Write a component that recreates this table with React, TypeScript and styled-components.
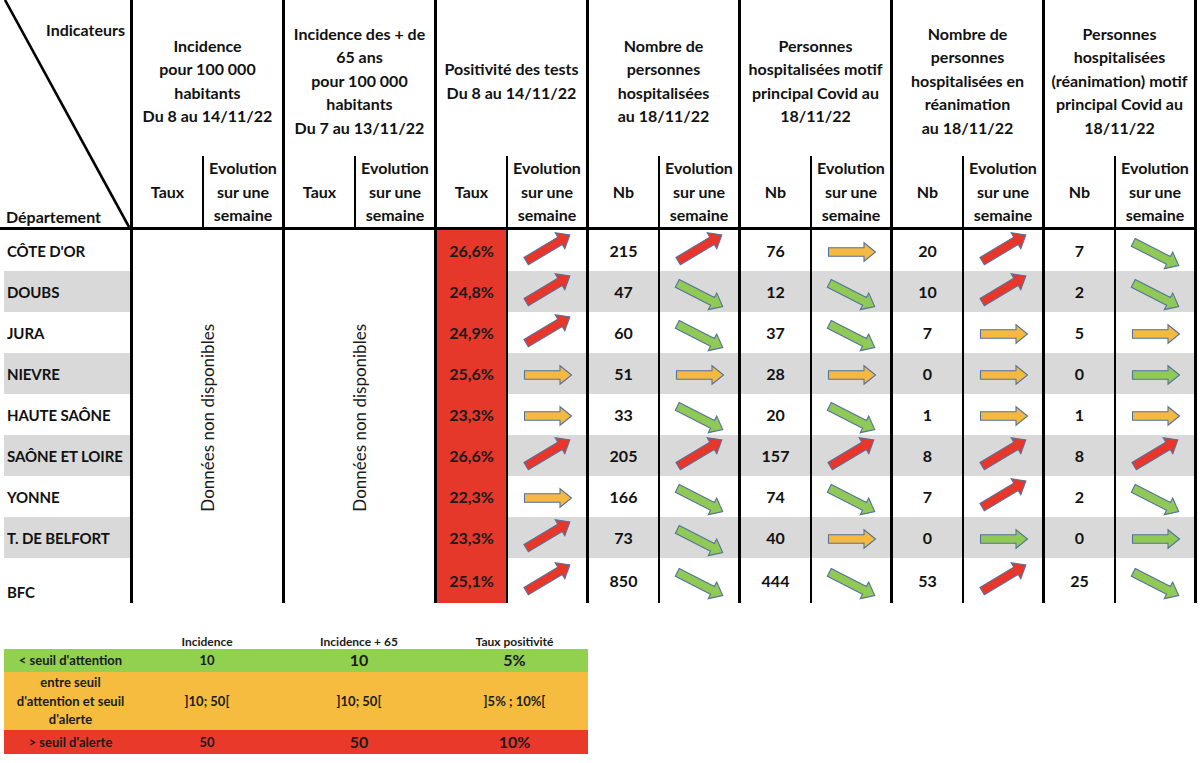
import React from "react";
import styled, { createGlobalStyle } from "styled-components";

const Global = createGlobalStyle`
  html, body { margin: 0; padding: 0; background: #fff; }
  body { font-family: Lato, "Liberation Sans", sans-serif; color: #111; }
`;

type Dir = "up" | "flat" | "down";
type Tone = "red" | "yellow" | "green";

const FILL: Record<Tone, string> = {
  red: "#e8362a",
  yellow: "#f5b941",
  green: "#90c956",
};

const Page = styled.div`
  width: 1200px;
  height: 763px;
  overflow: hidden;
`;

const Grid = styled.div`
  display: grid;
  grid-template-columns: 130px repeat(7, 72px 80px);
  grid-template-rows: 156px 74px repeat(8, 41px) 45px;
  width: 1194px;
  border-right: 3px solid #000;
`;

const Corner = styled.div`
  grid-row: 1 / span 2;
  grid-column: 1;
  position: relative;
  border-bottom: 3px solid #000;
  display: flex;
  flex-direction: column;
  justify-content: space-between;
  font-weight: 700;
  font-size: 16px;
`;

const CornerTop = styled.div`
  align-self: flex-end;
  padding: 19px 5px 0 0;
  line-height: 22px;
`;

const CornerBottom = styled.div`
  align-self: flex-start;
  padding: 0 0 0 6px;
  line-height: 20px;
`;

const Diagonal = styled.svg`
  position: absolute;
  left: 0;
  top: 0;
`;

const GroupHead = styled.div`
  grid-row: 1;
  grid-column: span 2;
  border-left: 3px solid #000;
  display: flex;
  align-items: center;
  justify-content: center;
  text-align: center;
  font-weight: 700;
  font-size: 16px;
  line-height: 23.5px;
  white-space: nowrap;
  padding-top: 5px;
`;

const SubHead = styled.div<{ $thin?: boolean }>`
  grid-row: 2;
  border-left: ${(p) => (p.$thin ? "2px" : "3px")} solid #000;
  border-bottom: 3px solid #000;
  display: flex;
  align-items: center;
  justify-content: center;
  text-align: center;
  font-weight: 700;
  font-size: 16px;
  line-height: 23.5px;
  white-space: nowrap;
`;

const NameCell = styled.div<{ $shade: boolean; $bottom?: boolean }>`
  grid-column: 1;
  border-left: 4px solid #fff;
  background: ${(p) => (p.$shade ? "#d9d9d9" : "#fff")};
  display: flex;
  align-items: ${(p) => (p.$bottom ? "flex-end" : "center")};
  padding: 0 0 ${(p) => (p.$bottom ? "2px" : "0")} 3px;
  font-weight: 700;
  font-size: 15px;
  letter-spacing: -0.1px;
  white-space: nowrap;
`;

const NoData = styled.div<{ $col: number }>`
  grid-row: 3 / span 9;
  grid-column: ${(p) => p.$col} / span 2;
  border-left: 3px solid #000;
  display: flex;
  align-items: center;
  justify-content: center;
`;

const NoDataText = styled.span`
  writing-mode: vertical-rl;
  transform: rotate(180deg);
  font-size: 17px;
  font-weight: 400;
  color: #1a1a1a;
  white-space: nowrap;
  margin-top: 2px;
`;

const RateCell = styled.div`
  grid-column: 6;
  border-left: 3px solid #000;
  background: #e5382a;
  display: flex;
  align-items: center;
  justify-content: center;
  font-weight: 700;
  font-size: 16px;
  color: #1a1a1a;
`;

const NbCell = styled.div<{ $shade: boolean }>`
  border-left: 3px solid #000;
  background: ${(p) => (p.$shade ? "#d9d9d9" : "#fff")};
  display: flex;
  align-items: center;
  justify-content: center;
  font-weight: 700;
  font-size: 16px;
`;

const EvoCell = styled.div<{ $shade: boolean }>`
  border-left: 2px solid #000;
  background: ${(p) => (p.$shade ? "#d9d9d9" : "#fff")};
  display: flex;
  align-items: center;
  justify-content: center;
`;

const ArrowSvg = styled.svg`
  display: block;
  overflow: visible;
`;

function Trend({ dir, tone }: { dir: Dir; tone: Tone }) {
  const angle = dir === "up" ? -31 : dir === "down" ? 27 : 0;
  const dy = dir === "up" ? -3 : dir === "down" ? 3 : 1;
  const half = dir === "flat" ? 23.5 : 25.5;
  const hs = 4.3;
  const hh = 9.3;
  const hl = 11.5;
  const d = `M${-half},${-hs} L${half - hl},${-hs} L${half - hl},${-hh} L${half},0 L${half - hl},${hh} L${half - hl},${hs} L${-half},${hs} Z`;
  return (
    <ArrowSvg width={56} height={36} viewBox="-28 -18 56 36">
      <path
        d={d}
        transform={`translate(1 ${dy}) rotate(${angle})`}
        fill={FILL[tone]}
        stroke="#53729c"
        strokeWidth={1.1}
        strokeLinejoin="miter"
      />
    </ArrowSvg>
  );
}

type T = [string, Dir, Tone];
type Row = {
  name: string;
  rate: string;
  pos: [Dir, Tone];
  vals: T[];
};

const U: [Dir, Tone] = ["up", "red"];
const Y: [Dir, Tone] = ["flat", "yellow"];
const G: [Dir, Tone] = ["flat", "green"];
const D: [Dir, Tone] = ["down", "green"];

const v = (n: string, a: [Dir, Tone]): T => [n, a[0], a[1]];

const ROWS: Row[] = [
  { name: "CÔTE D'OR", rate: "26,6%", pos: U, vals: [v("215", U), v("76", Y), v("20", U), v("7", D)] },
  { name: "DOUBS", rate: "24,8%", pos: U, vals: [v("47", D), v("12", D), v("10", U), v("2", D)] },
  { name: "JURA", rate: "24,9%", pos: U, vals: [v("60", D), v("37", D), v("7", Y), v("5", Y)] },
  { name: "NIEVRE", rate: "25,6%", pos: Y, vals: [v("51", Y), v("28", Y), v("0", Y), v("0", G)] },
  { name: "HAUTE SAÔNE", rate: "23,3%", pos: Y, vals: [v("33", D), v("20", D), v("1", Y), v("1", Y)] },
  { name: "SAÔNE ET LOIRE", rate: "26,6%", pos: U, vals: [v("205", U), v("157", U), v("8", U), v("8", U)] },
  { name: "YONNE", rate: "22,3%", pos: Y, vals: [v("166", D), v("74", D), v("7", U), v("2", D)] },
  { name: "T. DE BELFORT", rate: "23,3%", pos: U, vals: [v("73", D), v("40", Y), v("0", G), v("0", G)] },
  { name: "BFC", rate: "25,1%", pos: U, vals: [v("850", D), v("444", D), v("53", U), v("25", D)] },
];

const GROUPS: string[][] = [
  ["Incidence", "pour 100 000", "habitants", "Du 8 au 14/11/22"],
  ["Incidence des + de", "65 ans", "pour 100 000", "habitants", "Du 7 au 13/11/22"],
  ["Positivité des tests", "Du 8 au 14/11/22"],
  ["Nombre de", "personnes", "hospitalisées", "au 18/11/22"],
  ["Personnes", "hospitalisées motif", "principal Covid au", "18/11/22"],
  ["Nombre de", "personnes", "hospitalisées en", "réanimation", "au 18/11/22"],
  ["Personnes", "hospitalisées", "(réanimation) motif", "principal Covid au", "18/11/22"],
];

const Lines = ({ lines }: { lines: string[] }) => (
  <div>
    {lines.map((l, i) => (
      <div key={i}>{l}</div>
    ))}
  </div>
);

/* Legend */
const Legend = styled.div`
  display: grid;
  grid-template-columns: 133px 140px 164px 147px;
  grid-template-rows: 16px 23px 58px 24px;
  width: 584px;
  margin: 30px 0 0 4px;
  color: #1b1b1b;
`;

const LegendHead = styled.div`
  display: flex;
  align-items: flex-end;
  justify-content: center;
  font-size: 12px;
  font-weight: 700;
  white-space: nowrap;
`;

const LegendCell = styled.div<{ $bg: string; $big?: boolean }>`
  background: ${(p) => p.$bg};
  display: flex;
  align-items: center;
  justify-content: center;
  text-align: center;
  font-size: ${(p) => (p.$big ? "16px" : "13px")};
  font-weight: 700;
  line-height: 18.5px;
  white-space: nowrap;
`;

const GREEN = "#92d050";
const YELLOW = "#f5bc40";
const RED = "#e8392a";

export default function App() {
  return (
    <Page>
      <Global />
      <Grid>
        <Corner>
          <Diagonal width={130} height={227} viewBox="0 0 130 227">
            <line x1={5} y1={0} x2={129} y2={227} stroke="#000" strokeWidth={2.6} />
          </Diagonal>
          <CornerTop>Indicateurs</CornerTop>
          <CornerBottom>Département</CornerBottom>
        </Corner>
        {GROUPS.map((g, i) => (
          <GroupHead key={i}>
            <Lines lines={g} />
          </GroupHead>
        ))}
        {GROUPS.map((_, i) => (
          <React.Fragment key={i}>
            <SubHead>{i < 3 ? "Taux" : "Nb"}</SubHead>
            <SubHead $thin>
              <Lines lines={["Evolution", "sur une", "semaine"]} />
            </SubHead>
          </React.Fragment>
        ))}
        <NoData $col={2}>
          <NoDataText>Données non disponibles</NoDataText>
        </NoData>
        <NoData $col={4}>
          <NoDataText>Données non disponibles</NoDataText>
        </NoData>
        {ROWS.map((r, i) => {
          const shade = i % 2 === 1;
          return (
            <React.Fragment key={r.name}>
              <NameCell $shade={shade} $bottom={i === ROWS.length - 1}>
                {r.name}
              </NameCell>
              <RateCell>{r.rate}</RateCell>
              <EvoCell $shade={shade}>
                <Trend dir={r.pos[0]} tone={r.pos[1]} />
              </EvoCell>
              {r.vals.map(([n, d, t], j) => (
                <React.Fragment key={j}>
                  <NbCell $shade={shade}>{n}</NbCell>
                  <EvoCell $shade={shade}>
                    <Trend dir={d} tone={t} />
                  </EvoCell>
                </React.Fragment>
              ))}
            </React.Fragment>
          );
        })}
      </Grid>
      <Legend>
        <LegendHead />
        <LegendHead>Incidence</LegendHead>
        <LegendHead>Incidence + 65</LegendHead>
        <LegendHead>Taux positivité</LegendHead>

        <LegendCell $bg={GREEN}>&lt; seuil d'attention</LegendCell>
        <LegendCell $bg={GREEN}>10</LegendCell>
        <LegendCell $bg={GREEN} $big>10</LegendCell>
        <LegendCell $bg={GREEN} $big>5%</LegendCell>

        <LegendCell $bg={YELLOW}>
          <Lines lines={["entre seuil", "d'attention et seuil", "d'alerte"]} />
        </LegendCell>
        <LegendCell $bg={YELLOW}>]10; 50[</LegendCell>
        <LegendCell $bg={YELLOW}>]10; 50[</LegendCell>
        <LegendCell $bg={YELLOW}>]5% ; 10%[</LegendCell>

        <LegendCell $bg={RED}>&gt; seuil d'alerte</LegendCell>
        <LegendCell $bg={RED}>50</LegendCell>
        <LegendCell $bg={RED} $big>50</LegendCell>
        <LegendCell $bg={RED} $big>10%</LegendCell>
      </Legend>
    </Page>
  );
}
